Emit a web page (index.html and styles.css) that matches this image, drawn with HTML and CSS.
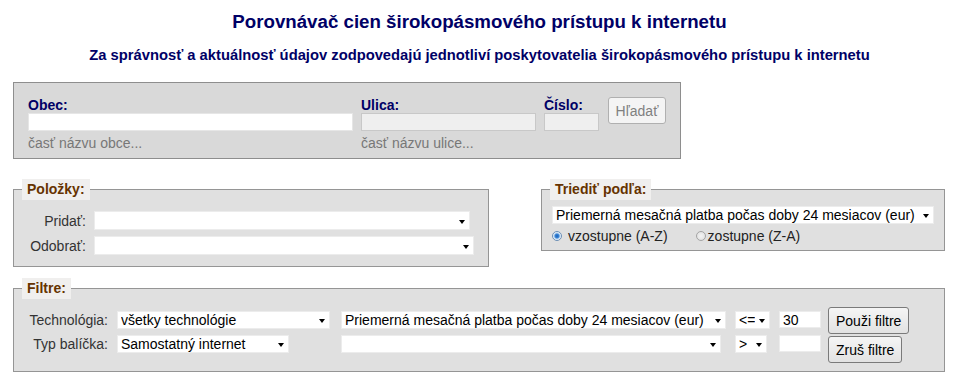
FILE: index.html
```html
<!DOCTYPE html>
<html lang="sk">
<head>
<meta charset="utf-8">
<title>Porovnávač cien širokopásmového prístupu k internetu</title>
<link rel="stylesheet" href="styles.css">
</head>
<body>
<header class="head">
  <h1 class="title">Porovnávač cien širokopásmového prístupu k internetu</h1>
  <p class="subtitle">Za správnosť a aktuálnosť údajov zodpovedajú jednotliví poskytovatelia širokopásmového prístupu k internetu</p>
</header>
<main class="page">
  <form class="search">
    <div class="field f-obec">
      <label class="flabel">Obec:</label>
      <input class="tin tin-obec" type="text">
      <span class="hint">časť názvu obce...</span>
    </div>
    <div class="field f-ulica">
      <label class="flabel">Ulica:</label>
      <input class="tin" type="text" disabled>
      <span class="hint">časť názvu ulice...</span>
    </div>
    <div class="field f-cislo">
      <label class="flabel">Číslo:</label>
      <input class="tin" type="text" disabled>
    </div>
    <button class="btn btn-search" type="button" disabled>Hľadať</button>
  </form>

  <div class="mid">
    <fieldset class="box box-items">
      <legend class="lg">Položky:</legend>
      <div class="items-grid">
        <label class="lbl">Pridať:</label>
        <span class="sel w376"><select><option></option></select></span>
        <label class="lbl">Odobrať:</label>
        <span class="sel w380"><select><option></option></select></span>
      </div>
    </fieldset>

    <fieldset class="box box-sort">
      <legend class="lg">Triediť podľa:</legend>
      <div class="sort-inner">
        <span class="sel w382"><select><option>Priemerná mesačná platba počas doby 24 mesiacov (eur)</option></select></span>
        <div class="radios">
          <label class="radio r-first"><input type="radio" name="ord" checked>vzostupne (A-Z)</label>
          <label class="radio r-second"><input type="radio" name="ord">zostupne (Z-A)</label>
        </div>
      </div>
    </fieldset>
  </div>

  <fieldset class="box box-filter">
    <legend class="lg">Filtre:</legend>
    <div class="fgrid">
      <label class="lbl r1">Technológia:</label>
      <span class="sel w213 r1"><select><option>všetky technológie</option></select></span>
      <span class="sel w385 r1"><select><option>Priemerná mesačná platba počas doby 24 mesiacov (eur)</option></select></span>
      <span class="sel w35 r1"><select><option>&lt;=</option></select></span>
      <input class="num r1" type="text" value="30">
      <button class="btn btn-f" type="button">Použi filtre</button>

      <label class="lbl">Typ balíčka:</label>
      <span class="sel w172"><select><option>Samostatný internet</option></select></span>
      <span class="sel w380"><select><option></option></select></span>
      <span class="sel w32"><select><option>&gt;</option></select></span>
      <input class="num" type="text" value="">
      <button class="btn btn-f r2b" type="button">Zruš filtre</button>
    </div>
  </fieldset>
</main>
</body>
</html>
```

FILE: styles.css
```css
* { box-sizing: border-box; }

body {
  margin: 0;
  font-family: "Liberation Sans", Arial, sans-serif;
  font-size: 14px;
  color: #000;
  background: #fff;
}

.head {
  text-align: center;
  padding-top: 10px;
}

.title {
  margin: 0;
  font-size: 18.7px;
  line-height: 23px;
  font-weight: bold;
  color: #000066;
}

.subtitle {
  margin: 14px 0 0;
  font-size: 14.75px;
  line-height: 16px;
  font-weight: bold;
  color: #000066;
}

.page {
  padding: 19px 14px 0 13px;
}

/* search box */
.search {
  display: flex;
  align-items: flex-start;
  width: 668px;
  margin: 0;
  background: #d9d9d9;
  border: 1px solid #8e8e8e;
  padding: 14px 0 7px 14px;
}

.field {
  display: flex;
  flex-direction: column;
}

.f-obec { width: 325px; margin-right: 8px; }
.f-ulica { width: 175px; margin-right: 8px; }
.f-cislo { width: 55px; margin-right: 9px; }

.flabel {
  font-weight: bold;
  color: #000066;
  line-height: 16px;
}

.tin {
  display: block;
  width: 100%;
  height: 18px;
  margin: 0;
  padding: 0 3px;
  border: 1px solid #c8c8c8;
  background: #efefef;
  font: inherit;
}

.tin-obec {
  background: #fff;
  border-color: #e6e6e6;
}

.hint {
  margin-top: 4px;
  line-height: 16px;
  color: #777;
}

.btn {
  font-family: "Liberation Sans", Arial, sans-serif;
  font-size: 14px;
  height: 27px;
  margin: 0;
  padding: 0 7px;
  border-radius: 3px;
  border: 1px solid #7a7a7a;
  background: linear-gradient(#f5f5f5, #e2e2e2);
  color: #000;
}

.btn-search {
  width: 58px;
  padding: 0;
  border-color: #b0b0b0;
  background: #f4f4f4;
  color: #808080;
}

/* fieldsets */
.mid {
  display: flex;
  justify-content: space-between;
  align-items: flex-start;
  margin-top: 20px;
}

.box {
  margin: 0;
  min-width: 0;
  border: 1px solid #959595;
  background: #e0e0e0;
}

.lg {
  padding: 2px 5px 3px;
  line-height: 16px;
  background: #f0efee;
  color: #663300;
  font-weight: bold;
}

.box-items {
  width: 476px;
  padding: 11px 8px 11px 8px;
}

.items-grid {
  display: grid;
  grid-template-columns: 58px auto;
  column-gap: 8px;
  row-gap: 6px;
  align-items: center;
  justify-items: start;
  padding-left: 6px;
}

.items-grid .sel select { height: 19px; }

.lbl {
  justify-self: end;
  line-height: 18px;
  color: #333;
  white-space: nowrap;
}

.box-sort {
  width: 404px;
  padding: 6px 8px 5px 8px;
}

.sort-inner {
  padding-left: 2px;
}

.radios {
  display: flex;
  margin-top: 3px;
  line-height: 18px;
  color: #222;
}

.radio {
  display: inline-flex;
  align-items: center;
}

.r-first { margin-right: 28px; }

.radio input {
  -webkit-appearance: none;
  appearance: none;
  width: 10px;
  height: 10px;
  margin: 0 6px 0 0;
  border: 1px solid #a4a4a4;
  border-radius: 50%;
  background: radial-gradient(circle, #f4f4f4 0, #dcdcdc 100%);
}

.r-second input { margin-right: 2px; }

.radio input:checked {
  border-color: #6b8fb5;
  background: radial-gradient(circle, #1a5fb4 0, #3a86d8 2px, #bcd6f0 3px, #fff 4.2px);
}

.box-filter {
  width: 932px;
  margin-top: 11px;
  padding: 8px 8px 8px 8px;
}

.fgrid {
  display: grid;
  grid-template-columns: 80px 215px 385px 35px 42px auto;
  column-gap: 9px;
  row-gap: 1px;
  align-items: start;
  justify-items: start;
  padding-left: 6px;
}

.fgrid .lbl { justify-self: end; }

.r1 { margin-top: 4px; }

.btn-f { margin-left: -2px; }

.r2b { margin-top: 1px; }

.num {
  width: 42px;
  height: 17px;
  margin-top: 0;
  padding: 0 3px;
  border: 1px solid #ececec;
  background: #fff;
  font-family: "Liberation Sans", Arial, sans-serif;
  font-size: 14px;
  color: #000;
}

.num.r1 { margin-top: 4px; }

/* selects */
.sel {
  position: relative;
  display: block;
}

.sel select {
  -webkit-appearance: none;
  appearance: none;
  display: block;
  width: 100%;
  height: 18px;
  margin: 0;
  padding: 0 14px 0 3px;
  border: 1px solid #ececec;
  border-radius: 0;
  background: #fff;
  font-family: "Liberation Sans", Arial, sans-serif;
  font-size: 14px;
  color: #000;
}

.sel::after {
  content: "";
  position: absolute;
  right: 5px;
  top: 50%;
  margin-top: -1px;
  border-left: 3.5px solid transparent;
  border-right: 3.5px solid transparent;
  border-top: 4px solid #000;
  pointer-events: none;
}

.w376 { width: 376px; }
.w380 { width: 380px; }
.w382 { width: 382px; }
.w385 { width: 385px; }
.w213 { width: 213px; }
.w172 { width: 172px; }
.w35 { width: 35px; }
.w32 { width: 32px; }
```
